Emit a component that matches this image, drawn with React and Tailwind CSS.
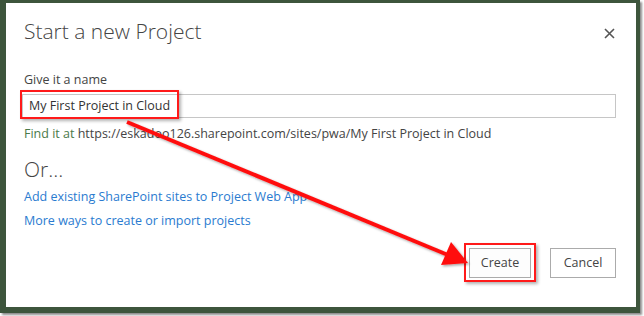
import React from 'react';

const font = { fontFamily: '"Segoe UI", "Open Sans", "Liberation Sans", sans-serif' };

export default function App() {
    return (
        <div className="w-[644px] h-[316px] bg-white relative overflow-hidden" style={font}>
            {/* screenshot frame with the page peeking out behind the dialog */}
            <div className="w-[640px] h-[313px] bg-[#3d553c] pt-[3px] pl-[6px] pr-[4px] pb-[6px] shadow-[2px_2px_2px_rgba(0,0,0,0.45)]">
                <div className="h-full bg-white flex flex-col pl-[18px] pr-[20px]">
                    <div className="flex items-start justify-between pt-[14px]">
                        <h1 className="text-[21px] font-light text-[#444] leading-[28px]">Start a new Project</h1>
                        <svg width="11" height="11" viewBox="0 0 11 11" className="mt-[11px] mr-[1px]">
                            <path d="M1 1L10 10M10 1L1 10" stroke="#555" strokeWidth="1.6" />
                        </svg>
                    </div>

                    <div className="mt-[27px] text-[12.5px] text-[#444] leading-[16px]">Give it a name</div>
                    <div className="mt-[6px] h-[24px] border border-[#c6c6c6] flex items-center px-[6px] text-[12.5px] text-[#333] -ml-[2px]">
                        <span className="relative">
                            My First Project in Cloud
                            <span className="absolute -left-[9px] -top-[7px] w-[159px] h-[29px] border-2 border-[#ff1a1a] shadow-[2px_2px_3px_rgba(0,0,0,0.3)]" />
                        </span>
                    </div>
                    <div className="mt-[8px] text-[12.5px] leading-[16px] text-[#444]">
                        <span className="text-[#4a7a4a]">Find it at</span> https://eskadoo126.sharepoint.com/sites/pwa/My First Project in Cloud
                    </div>

                    <div className="mt-[15px] text-[21px] font-light text-[#444] leading-[24px]">Or...</div>
                    <div className="mt-[8px] text-[12.5px] leading-[16px] text-[#2a7bd0]">Add existing SharePoint sites to Project Web App</div>
                    <div className="mt-[8px] text-[12.5px] leading-[16px] text-[#2a7bd0]">More ways to create or import projects</div>

                    <div className="flex justify-end gap-[19px] mt-[19px]">
                        <div className="relative">
                            <button className="w-[62px] h-[30px] border border-[#ababab] bg-[#fdfdfd] text-[12.5px] text-[#444]">Create</button>
                            <span className="absolute -left-[5px] -top-[5px] w-[72px] h-[39px] border-2 border-[#ff1a1a] shadow-[2px_2px_3px_rgba(0,0,0,0.3)]" />
                        </div>
                        <button className="w-[66px] h-[30px] border border-[#ababab] bg-white text-[12.5px] text-[#444]">Cancel</button>
                    </div>
                </div>
            </div>

            {/* annotation arrow */}
            <svg className="absolute left-0 top-0 pointer-events-none" width="644" height="316">
                <defs>
                    <filter id="sh" x="-10%" y="-10%" width="120%" height="120%">
                        <feDropShadow dx="1.5" dy="1.5" stdDeviation="1.2" floodColor="#000" floodOpacity="0.35" />
                    </filter>
                </defs>
                <g filter="url(#sh)">
                    <line x1="127" y1="122" x2="448" y2="255" stroke="#ff1010" strokeWidth="4" />
                    <polygon points="468,263 441,265 451,242" fill="#ff1010" />
                </g>
            </svg>
        </div>
    );
}
